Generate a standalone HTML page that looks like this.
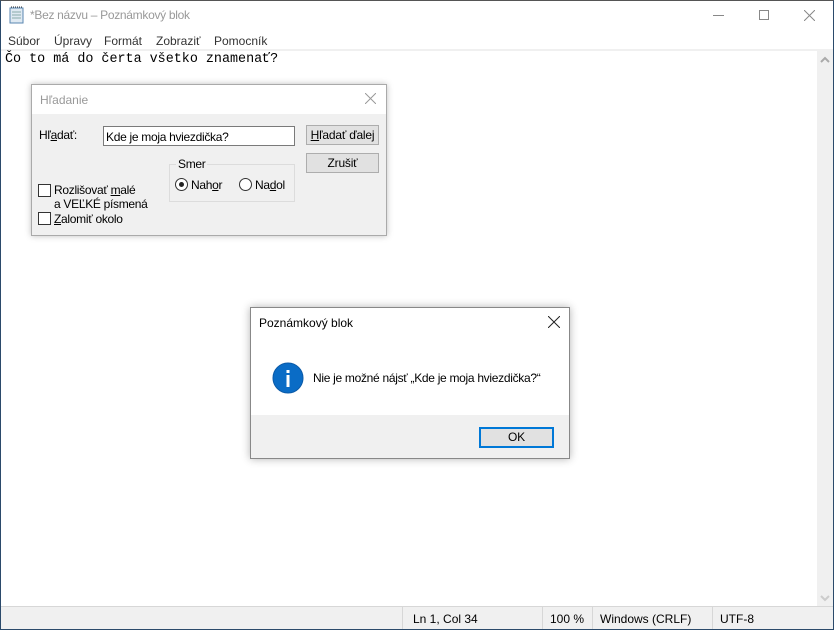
<!DOCTYPE html>
<html><head><meta charset="utf-8"><style>
*{margin:0;padding:0;box-sizing:border-box}
body{width:834px;height:630px;overflow:hidden;background:#fff;font-family:"Liberation Sans",sans-serif;font-size:12px;color:#000;position:relative}
.a{position:absolute}
u{text-decoration:underline}
.btn{position:absolute;background:#e1e1e1;border:1px solid #adadad;text-align:center;line-height:18px;font-size:12px;letter-spacing:-0.2px}
.cb{position:absolute;width:13px;height:13px;border:1px solid #333;background:#fff}
.rb{position:absolute;width:13px;height:13px;border:1px solid #333;border-radius:50%;background:#fff}
.s{letter-spacing:-0.3px}
</style></head><body>
<div class="a" style="left:0;top:0;width:834px;height:630px;border:1px solid #2b4a6b;border-top:1px solid #555"></div>
<svg class="a" style="left:9px;top:6px" width="16" height="18"><rect x="1" y="2" width="13" height="15" fill="#dfe9f2" stroke="#5a86b0"/><path d="M3 6h9M3 9h9M3 12h9" stroke="#8aa" /><path d="M2 1h11" stroke="#333" stroke-dasharray="1 1"/></svg>
<div class="a s" style="left:30px;top:8px;font-size:12px;color:#999">*Bez názvu – Poznámkový blok</div>
<div class="a" style="left:713px;top:15px;width:11px;height:1px;background:#888"></div>
<div class="a" style="left:759px;top:10px;width:10px;height:10px;border:1px solid #888"></div>
<svg class="a" style="left:804px;top:10px" width="11" height="11"><path d="M0 0L11 11M11 0L0 11" stroke="#888"/></svg>
<div class="a" style="left:8px;top:34px;color:#333">Súbor</div>
<div class="a" style="left:54px;top:34px;color:#333">Úpravy</div>
<div class="a" style="left:104px;top:34px;color:#333">Formát</div>
<div class="a" style="left:156px;top:34px;color:#333">Zobraziť</div>
<div class="a" style="left:214px;top:34px;color:#333">Pomocník</div>
<div class="a" style="left:1px;top:49px;width:832px;height:2px;background:#f0f0f0"></div>
<div class="a" style="left:5px;top:52px;font-family:'Liberation Mono',monospace;font-size:13.4px">Čo to má do čerta všetko znamenať?</div>
<div class="a" style="left:817px;top:51px;width:16px;height:555px;background:#f0f0f0"></div>
<svg class="a" style="left:820px;top:56px" width="10" height="8"><path d="M1 6L5 2L9 6" stroke="#aaa" stroke-width="2" fill="none"/></svg>
<svg class="a" style="left:820px;top:594px" width="10" height="8"><path d="M1 2L5 6L9 2" stroke="#ccc" stroke-width="2" fill="none"/></svg>
<div class="a" style="left:1px;top:606px;width:832px;height:23px;background:#f0f0f0;border-top:1px solid #d7d7d7"></div>
<div class="a" style="left:402px;top:607px;width:1px;height:22px;background:#d7d7d7"></div>
<div class="a" style="left:542px;top:607px;width:1px;height:22px;background:#d7d7d7"></div>
<div class="a" style="left:592px;top:607px;width:1px;height:22px;background:#d7d7d7"></div>
<div class="a" style="left:712px;top:607px;width:1px;height:22px;background:#d7d7d7"></div>
<div class="a" style="left:413px;top:612px">Ln 1, Col 34</div>
<div class="a" style="left:550px;top:612px">100 %</div>
<div class="a" style="left:600px;top:612px">Windows (CRLF)</div>
<div class="a" style="left:720px;top:612px">UTF-8</div>
<div class="a" style="left:31px;top:84px;width:356px;height:152px;background:#f0f0f0;border:1px solid #aaa;box-shadow:0 0 6px rgba(0,0,0,.25)"></div>
<div class="a" style="left:32px;top:85px;width:354px;height:29px;background:#fff"></div>
<div class="a" style="left:40px;top:93px;color:#999">Hľadanie</div>
<svg class="a" style="left:365px;top:93px" width="11" height="11"><path d="M0 0L11 11M11 0L0 11" stroke="#999"/></svg>
<div class="a s" style="left:39px;top:128px">Hľ<u>a</u>dať:</div>
<div class="a s" style="left:103px;top:126px;width:192px;height:20px;border:1px solid #7a7a7a;background:#fff;padding:3px 2px">Kde je moja hviezdička?</div>
<div class="btn" style="left:306px;top:125px;width:73px;height:20px"><u>H</u>ľadať ďalej</div>
<div class="btn" style="left:306px;top:153px;width:73px;height:20px">Zrušiť</div>
<div class="a" style="left:169px;top:164px;width:126px;height:38px;border:1px solid #dcdcdc"></div>
<div class="a s" style="left:176px;top:157px;background:#f0f0f0;padding:0 2px">Smer</div>
<div class="rb" style="left:175px;top:178px"><div class="a" style="left:3px;top:3px;width:5px;height:5px;border-radius:50%;background:#222"></div></div>
<div class="a s" style="left:191px;top:178px">Nah<u>o</u>r</div>
<div class="rb" style="left:239px;top:178px"></div>
<div class="a s" style="left:255px;top:178px">Na<u>d</u>ol</div>
<div class="cb" style="left:38px;top:184px"></div>
<div class="a s" style="left:54px;top:183px;line-height:14px">Rozlišovať <u>m</u>alé<br>a VEĽKÉ písmená</div>
<div class="cb" style="left:38px;top:212px"></div>
<div class="a s" style="left:54px;top:212px"><u>Z</u>alomiť okolo</div>
<div class="a" style="left:250px;top:307px;width:320px;height:152px;background:#fff;border:1px solid #888;box-shadow:0 0 8px rgba(0,0,0,.3)"></div>
<div class="a" style="left:251px;top:415px;width:318px;height:43px;background:#f0f0f0"></div>
<div class="a" style="left:259px;top:316px">Poznámkový blok</div>
<svg class="a" style="left:548px;top:316px" width="12" height="12"><path d="M0 0L12 12M12 0L0 12" stroke="#222"/></svg>
<svg class="a" style="left:272px;top:362px" width="32" height="32"><circle cx="16" cy="16" r="15" fill="#0a6cc6" stroke="#0a5aa8"/><rect x="14.5" y="8" width="3" height="3" fill="#fff"/><rect x="14.5" y="13" width="3" height="12" fill="#fff"/></svg>
<div class="a s" style="left:313px;top:371px">Nie je možné nájsť „Kde je moja hviezdička?“</div>
<div class="btn" style="left:479px;top:427px;width:75px;height:21px;border:2px solid #0078d7;line-height:17px">OK</div>
</body></html>
